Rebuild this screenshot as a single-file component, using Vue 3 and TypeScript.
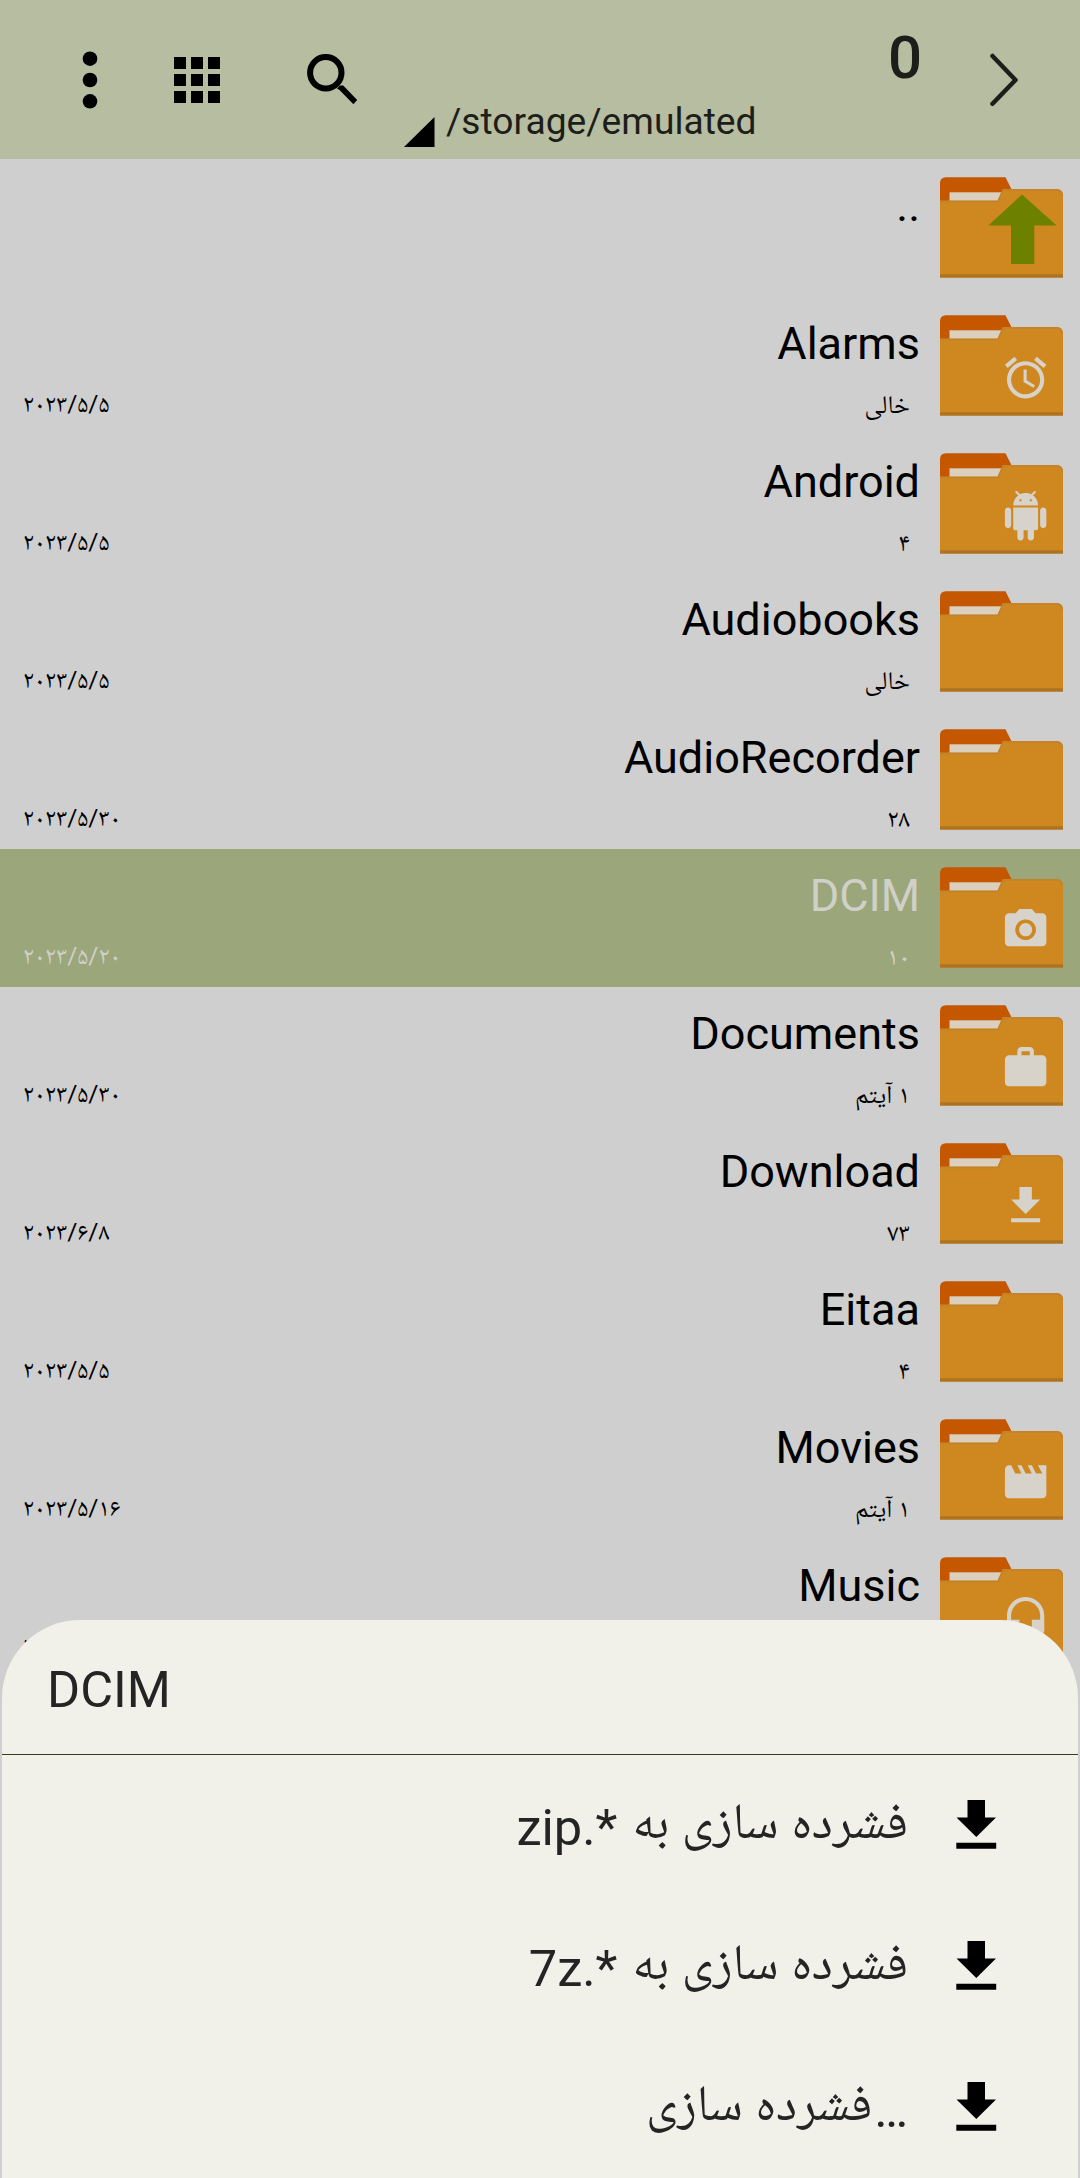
<script setup lang="ts">
interface Entry {
  name: string
  info: string
  date: string
  glyph?: string
  up?: boolean
  selected?: boolean
}

const glyphs: Record<string, string> = {
  alarm: 'M22 5.72l-4.6-3.86-1.29 1.53 4.6 3.86L22 5.72zM7.88 3.39L6.6 1.86 2 5.71l1.29 1.53 4.59-3.85zM12.5 8H11v6l4.75 2.85.75-1.23-4-2.37V8zM12 4c-4.97 0-9 4.03-9 9s4.02 9 9 9c4.97 0 9-4.03 9-9s-4.03-9-9-9zm0 16c-3.87 0-7-3.13-7-7s3.13-7 7-7 7 3.13 7 7-3.13 7-7 7z',
  android: 'M6 18c0 .55.45 1 1 1h1v3.5c0 .83.67 1.5 1.5 1.5s1.5-.67 1.5-1.5V19h2v3.5c0 .83.67 1.5 1.5 1.5s1.5-.67 1.5-1.5V19h1c.55 0 1-.45 1-1V8H6v10zM3.5 8C2.67 8 2 8.67 2 9.5v7c0 .83.67 1.5 1.5 1.5S5 17.33 5 16.5v-7C5 8.67 4.33 8 3.5 8zm17 0c-.83 0-1.5.67-1.5 1.5v7c0 .83.67 1.5 1.5 1.5s1.5-.67 1.5-1.5v-7c0-.83-.67-1.5-1.5-1.5zm-4.97-5.84l1.3-1.3c.2-.2.2-.51 0-.71-.2-.2-.51-.2-.71 0l-1.48 1.48C13.85 1.23 12.95 1 12 1c-.96 0-1.86.23-2.66.63L7.85.15c-.2-.2-.51-.2-.71 0-.2.2-.2.51 0 .71l1.31 1.31C6.97 3.26 6 5.01 6 7h12c0-1.99-.97-3.75-2.47-4.84zM10 5H9V4h1v1zm5 0h-1V4h1v1z',
  camera: 'M12 8.8a3.2 3.2 0 1 0 0 6.4 3.2 3.2 0 0 0 0-6.4zM9 2L7.17 4H4c-1.1 0-2 .9-2 2v12c0 1.1.9 2 2 2h16c1.1 0 2-.9 2-2V6c0-1.1-.9-2-2-2h-3.17L15 2H9zm3 15c-2.76 0-5-2.24-5-5s2.24-5 5-5 5 2.24 5 5-2.24 5-5 5z',
  work: 'M20 6h-4V4c0-1.11-.89-2-2-2h-4c-1.11 0-2 .89-2 2v2H4c-1.11 0-1.99.89-1.99 2L2 19c0 1.11.89 2 2 2h16c1.11 0 2-.89 2-2V8c0-1.11-.89-2-2-2zm-6 0h-4V4h4v2z',
  download: 'M19 9h-4V3H9v6H5l7 7 7-7zM5 18v2h14v-2H5z',
  movie: 'M18 4l2 4h-3l-2-4h-2l2 4h-3l-2-4H8l2 4H7L5 4H4c-1.1 0-1.99.9-1.99 2L2 18c0 1.1.9 2 2 2h16c1.1 0 2-.9 2-2V4h-4z',
  headset: 'M12 1c-4.97 0-9 4.03-9 9v7c0 1.66 1.34 3 3 3h3v-8H5v-2c0-3.87 3.13-7 7-7s7 3.13 7 7v2h-4v8h3c1.66 0 3-1.34 3-3v-7c0-4.97-4.03-9-9-9z',
}

const entries: Entry[] = [
  { name: '..', info: '', date: '', up: true },
  { name: 'Alarms', info: 'خالی', date: '۲۰۲۳/۵/۵', glyph: 'alarm' },
  { name: 'Android', info: '۴', date: '۲۰۲۳/۵/۵', glyph: 'android' },
  { name: 'Audiobooks', info: 'خالی', date: '۲۰۲۳/۵/۵' },
  { name: 'AudioRecorder', info: '۲۸', date: '۲۰۲۳/۵/۳۰' },
  { name: 'DCIM', info: '۱۰', date: '۲۰۲۳/۵/۲۰', glyph: 'camera', selected: true },
  { name: 'Documents', info: '۱ آیتم', date: '۲۰۲۳/۵/۳۰', glyph: 'work' },
  { name: 'Download', info: '۷۳', date: '۲۰۲۳/۶/۸', glyph: 'download' },
  { name: 'Eitaa', info: '۴', date: '۲۰۲۳/۵/۵' },
  { name: 'Movies', info: '۱ آیتم', date: '۲۰۲۳/۵/۱۶', glyph: 'movie' },
  { name: 'Music', info: '', date: '۲۰۲۳/۵/۵', glyph: 'headset' },
]

const actions = [
  { label: 'فشرده سازی به', suffix: '*.zip', dots: '' },
  { label: 'فشرده سازی به', suffix: '*.7z', dots: '' },
  { label: 'فشرده سازی', suffix: '', dots: '…' },
]
</script>

<template>
  <div class="screen">
    <header class="bar">
      <svg class="tools" width="370" height="159" viewBox="0 0 370 159">
        <circle cx="90" cy="58.7" r="7.3" />
        <circle cx="90" cy="80" r="7.3" />
        <circle cx="90" cy="101.3" r="7.3" />
        <template v-for="r in 3" :key="r">
          <rect v-for="c in 3" :key="c" :x="157 + c * 17" :y="40 + r * 17" width="12" height="12" />
        </template>
        <circle cx="325.8" cy="72.7" r="15.7" fill="none" stroke="#000" stroke-width="6" />
        <path d="M337 88.5l3-3h3.2l14 14.6-3.800 4.100L339.500 90z" />
      </svg>
      <div class="path">
        <svg class="corner" width="31" height="30" viewBox="0 0 31 30"><path d="M0 30L30.500 0V30z" /></svg>
        <span>/storage/emulated</span>
      </div>
      <span class="count">0</span>
      <svg class="chevron" width="34" height="60" viewBox="0 0 34 60">
        <path d="M5.500 6L28.500 30L5.500 53.800" fill="none" stroke="#1d1e1a" stroke-width="4.500" stroke-linecap="round" stroke-linejoin="round" />
      </svg>
    </header>

    <main class="list">
      <div v-for="e in entries" :key="e.name" class="row" :class="{ selected: e.selected }">
        <span class="date">{{ e.date }}</span>
        <div class="text">
          <span class="name">{{ e.name }}</span>
          <span class="info" dir="rtl">{{ e.info }}</span>
        </div>
        <svg class="folder" width="123" height="101" viewBox="0 -0.3 123 101">
          <path d="M0 30V6Q0 0 6 0H65.500L72 13V30z" fill="#c45700" />
          <rect x="9.500" y="15" width="54" height="10" fill="#dbd0be" />
          <path d="M0 23.500H57.500L62.800 11.700H116Q123 11.700 123 19V100.300H0z" fill="#cf881f" />
          <path d="M0 24.200H58L63.300 12.500H116Q122.300 12.500 122.300 19" fill="none" stroke="#c4832a" stroke-width="1.800" />
          <rect y="97" width="123" height="3.300" fill="#ad7322" />
          <path v-if="e.up" d="M82 17.300L116.700 48.300H94.300V86.700H71V48.300H48.300z" fill="#6d8000" />
          <path v-if="e.glyph" :d="glyphs[e.glyph]" transform="translate(60.800 37.600) scale(2.070)" fill="#d7d2ca" />
        </svg>
      </div>
    </main>

    <section class="sheet">
      <h2 class="title">DCIM</h2>
      <div v-for="(a, i) in actions" :key="i" class="action">
        <span v-if="a.suffix" class="latin" dir="rtl">{{ a.suffix }}</span>
        <span class="persian" dir="rtl">{{ a.label }}</span>
        <span v-if="a.dots" class="latin dots">{{ a.dots }}</span>
        <svg class="save" width="41" height="49" viewBox="0 0 41 49">
          <path d="M11.500 0H29V17.500H40L20.300 37L.500 17.500H11.500zM.300 42.700H40.200V48.800H.300z" />
        </svg>
      </div>
    </section>
  </div>
</template>

<style>
html,
body {
  margin: 0;
  overflow: hidden;
  background: #cfcfcf;
}
</style>

<style scoped>
.screen {
  position: relative;
  width: 1080px;
  height: 2178px;
  overflow: hidden;
  background: #cfcfcf;
  font-family: Roboto, "Noto Naskh Arabic", "Noto Sans Arabic", "DejaVu Sans", sans-serif;
  color: #000;
}
.bar {
  display: flex;
  height: 159px;
  background: #b7bda1;
  color: #1d1e1a;
}
.tools {
  flex: none;
}
.path {
  display: flex;
  flex: none;
  width: 450px;
  margin-left: 34px;
  padding-top: 99px;
  box-sizing: border-box;
  font-size: 37.200px;
  line-height: 44px;
  white-space: nowrap;
}
.corner {
  flex: none;
  margin: 18px 11px 0 0;
}
.count {
  width: 34px;
  margin-left: 34px;
  padding-top: 23px;
  font-size: 60px;
  font-weight: 500;
  line-height: 70px;
}
.chevron {
  margin: 50px 0 0 65px;
}
.row {
  display: flex;
  height: 138px;
}
.date {
  flex: none;
  width: 200px;
  padding: 91px 0 0 23px;
  box-sizing: border-box;
  font-size: 24.600px;
  line-height: 32px;
}
.text {
  display: flex;
  flex: 1;
  flex-direction: column;
  align-items: flex-end;
  padding: 17px 20px 0 0;
}
.name {
  font-size: 45px;
  line-height: 60px;
}
.info {
  margin: 14px 10px 0 0;
  font-size: 25.400px;
  line-height: 32px;
}
.folder {
  flex: none;
  margin: 18px 17px 0 0;
}
.selected {
  background: #9ba67a;
  color: #cfd0c8;
}
.sheet {
  position: absolute;
  left: 2px;
  right: 2px;
  top: 1620px;
  height: 558px;
  overflow: hidden;
  border-radius: 78px 78px 0 0;
  background: #f1f1e9;
  color: #242424;
}
.title {
  height: 135px;
  margin: 0;
  padding: 35px 0 0 45px;
  box-sizing: border-box;
  border-bottom: 1px solid #3a3d1a;
  font-size: 50.500px;
  font-weight: 400;
  line-height: 70px;
}
.action {
  display: flex;
  justify-content: flex-end;
  height: 141px;
  padding: 45px 81px 0 0;
  box-sizing: border-box;
  font-size: 50.600px;
  line-height: 60px;
  white-space: nowrap;
}
.persian {
  margin-top: -9px;
}
.latin {
  margin: -2px 15px 0 0;
}
.dots {
  margin: -2px 0 0 2px;
}
.save {
  flex: none;
  margin-left: 48px;
}
</style>
